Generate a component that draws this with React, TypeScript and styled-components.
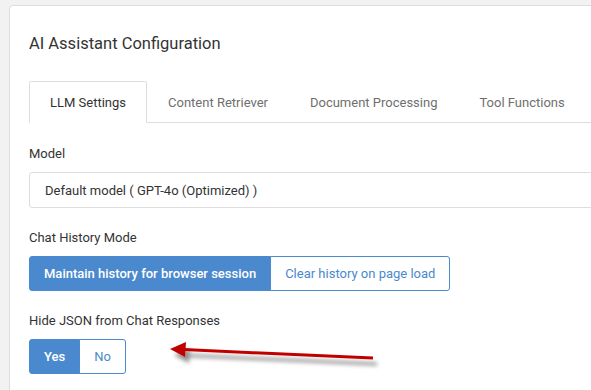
import React, { useState } from "react";
import styled, { createGlobalStyle } from "styled-components";

const GlobalStyle = createGlobalStyle`
    html, body {
        margin: 0;
        background: #f2f2f2;
        overflow: hidden;
    }
    body {
        font-family: Roboto, "Liberation Sans", Arial, sans-serif;
        color: #333;
    }
`;

const tabs = ["LLM Settings", "Content Retriever", "Document Processing", "Tool Functions"];

export default function App() {
    const [tab, setTab] = useState(0);
    const [history, setHistory] = useState(0);
    const [hideJson, setHideJson] = useState(0);

    return (
        <Page>
            <GlobalStyle />
            <Card>
                <Title>AI Assistant Configuration</Title>
                <TabList>
                    {tabs.map((t, i) => (
                        <Tab key={t} $active={tab === i} onClick={() => setTab(i)}>
                            {t}
                        </Tab>
                    ))}
                </TabList>
                <Form>
                    <Field>
                        <Label>Model</Label>
                        <Select>Default model ( GPT-4o (Optimized) )</Select>
                    </Field>
                    <Field>
                        <Label>Chat History Mode</Label>
                        <ButtonGroup>
                            <ToggleButton $active={history === 0} onClick={() => setHistory(0)}>
                                Maintain history for browser session
                            </ToggleButton>
                            <ToggleButton $active={history === 1} onClick={() => setHistory(1)}>
                                Clear history on page load
                            </ToggleButton>
                        </ButtonGroup>
                    </Field>
                    <Field>
                        <Label>Hide JSON from Chat Responses</Label>
                        <ButtonGroup>
                            <ToggleButton $active={hideJson === 0} onClick={() => setHideJson(0)}>
                                Yes
                            </ToggleButton>
                            <ToggleButton $active={hideJson === 1} onClick={() => setHideJson(1)}>
                                No
                            </ToggleButton>
                        </ButtonGroup>
                    </Field>
                </Form>
            </Card>
            {/* annotation arrow pointing at the Yes/No toggle */}
            <Arrow width="230" height="44" viewBox="0 0 230 44">
                <defs>
                    <filter id="shadow" x="-10%" y="-50%" width="120%" height="250%">
                        <feGaussianBlur in="SourceAlpha" stdDeviation="2" />
                        <feOffset dx="4" dy="6" result="blur" />
                        <feComponentTransfer>
                            <feFuncA type="linear" slope="0.45" />
                        </feComponentTransfer>
                        <feMerge>
                            <feMergeNode />
                            <feMergeNode in="SourceGraphic" />
                        </feMerge>
                    </filter>
                </defs>
                <g filter="url(#shadow)">
                    <line x1="213" y1="23" x2="24" y2="14.6" stroke="#c00000" strokeWidth="3" />
                    <polygon points="10,14 26,7 25,22" fill="#c00000" />
                </g>
            </Arrow>
        </Page>
    );
}

const Page = styled.div`
    position: relative;
    width: 100vw;
    height: 100vh;
    overflow: hidden;
    padding: 5px 0 0 9px;
    box-sizing: border-box;
`;

const Card = styled.div`
    width: 700px;
    height: 420px;
    background: #fff;
    border: 1px solid #dedede;
    border-radius: 4px;
    padding: 28px 0 0 19px;
    box-sizing: border-box;
`;

const Title = styled.h1`
    margin: 0;
    font-size: 16.5px;
    line-height: 19px;
    font-weight: 400;
    color: #333;
`;

const TabList = styled.div`
    display: flex;
    margin-top: 28px;
    border-bottom: 1px solid #dddddd;
`;

const Tab = styled.div<{ $active?: boolean }>`
    box-sizing: border-box;
    height: 42px;
    margin-bottom: -1px;
    padding: 0 20px;
    display: flex;
    align-items: center;
    font-size: 13px;
    cursor: pointer;
    border: 1px solid transparent;
    border-radius: 2px 2px 0 0;
    color: ${(p) => (p.$active ? "#333" : "#6f6f6f")};
    background: ${(p) => (p.$active ? "#fff" : "transparent")};
    border-color: ${(p) => (p.$active ? "#dddddd #dddddd transparent" : "transparent")};
`;

const Form = styled.div`
    display: flex;
    flex-direction: column;
    gap: 21px;
    padding-top: 22px;
`;

const Field = styled.div`
    display: flex;
    flex-direction: column;
    align-items: flex-start;
    gap: 9px;
`;

const Label = styled.label`
    font-size: 13px;
    line-height: 18px;
    color: #333;
`;

const Select = styled.div`
    align-self: stretch;
    height: 36px;
    box-sizing: border-box;
    display: flex;
    align-items: center;
    padding: 0 15px;
    font-size: 13px;
    color: #333;
    border: 1px solid #dddddd;
    border-radius: 3px;
`;

const ButtonGroup = styled.div`
    display: flex;

    & > button:first-child {
        border-radius: 3px 0 0 3px;
    }
    & > button:last-child {
        border-radius: 0 3px 3px 0;
        margin-left: -1px;
    }
`;

const ToggleButton = styled.button<{ $active?: boolean }>`
    height: 35px;
    padding: 0 14px;
    font-family: inherit;
    font-size: 13px;
    font-weight: ${(p) => (p.$active ? 500 : 400)};
    cursor: pointer;
    border: 1px solid #4a89ce;
    background: ${(p) => (p.$active ? "#4a89ce" : "#fff")};
    color: ${(p) => (p.$active ? "#fff" : "#4a89ce")};
`;

const Arrow = styled.svg`
    position: absolute;
    left: 160px;
    top: 335px;
    pointer-events: none;
`;
